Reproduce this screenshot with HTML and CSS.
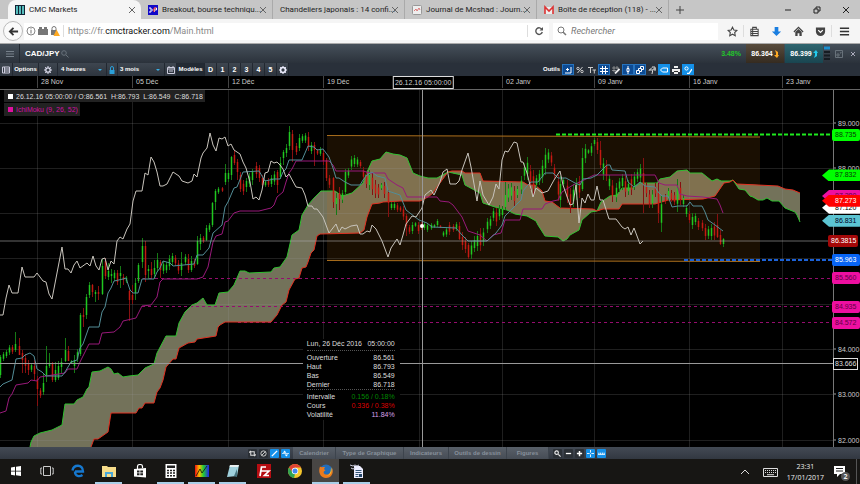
FILE: index.html
```html
<!DOCTYPE html>
<html lang="fr">
<head>
<meta charset="utf-8">
<title>CMC Markets</title>
<link rel="stylesheet" href="styles.css">
</head>
<body>
<header class="tabs">
  <div class="tab active"><svg class="fav" viewBox="0 0 10 10"><rect width="10" height="10" fill="#123"/><path d="M1 1h2v8H1zM4 1h2v8H4zM7 1h2v8H7z" fill="#5bb"/></svg><span>CMC Markets</span><button class="x" aria-label="Fermer"><svg viewBox="0 0 8 8"><path d="M1 1l6 6M7 1L1 7" stroke="#666"/></svg></button></div>
  <div class="tab"><svg class="fav" viewBox="0 0 10 10"><rect width="10" height="10" fill="#1008c8"/><path d="M1 3h2v4H1M3.500 5h2M6.500 7V3h2v2H7" stroke="#fff" fill="none"/><path d="M6 7V3h2" stroke="#e22" fill="none"/></svg><span>Breakout, bourse techniqu...</span><button class="x" aria-label="Fermer"><svg viewBox="0 0 8 8"><path d="M1 1l6 6M7 1L1 7" stroke="#666"/></svg></button></div>
  <div class="tab"><span>Chandeliers japonais : 14 confi...</span><button class="x" aria-label="Fermer"><svg viewBox="0 0 8 8"><path d="M1 1l6 6M7 1L1 7" stroke="#666"/></svg></button></div>
  <div class="tab"><svg class="fav" viewBox="0 0 10 10"><rect x=".5" y=".5" width="9" height="9" rx="1" fill="#eee" stroke="#999"/><path d="M2 6l2-2 1 2 2-3 1 2" stroke="#d77" fill="none"/></svg><span>Journal de Mcshad : Journ...</span><button class="x" aria-label="Fermer"><svg viewBox="0 0 8 8"><path d="M1 1l6 6M7 1L1 7" stroke="#666"/></svg></button></div>
  <div class="tab"><svg class="fav" viewBox="0 0 10 10"><path d="M1 2h8v7H1z" fill="#eee"/><path d="M1 9V2l4 4 4-4v7" stroke="#d33" stroke-width="1.600" fill="none"/></svg><span>Boîte de réception (118) - ...</span><button class="x" aria-label="Fermer"><svg viewBox="0 0 8 8"><path d="M1 1l6 6M7 1L1 7" stroke="#666"/></svg></button></div>
  <button class="plus" aria-label="Nouvel onglet"><svg viewBox="0 0 8 8"><path d="M4 0v8M0 4h8" stroke="#444"/></svg></button>
  <div class="win">
    <button aria-label="Réduire"><svg viewBox="0 0 8 8"><path d="M1 4h6" stroke="#222"/></svg></button>
    <button aria-label="Restaurer"><svg viewBox="0 0 8 8"><path d="M1 3h4v4H1zM3 3V1h4v4H5" stroke="#222" fill="none"/></svg></button>
    <button aria-label="Quitter"><svg viewBox="0 0 8 8"><path d="M1 1l6 6M7 1L1 7" stroke="#222"/></svg></button>
  </div>
</header>
<nav class="nav">
  <button class="back" aria-label="Retour"><svg viewBox="0 0 12 12"><path d="M11 6H3M6 2L2 6l4 4" stroke="#333" stroke-width="2" fill="none"/></svg></button>
  <div class="url">
    <svg viewBox="0 0 10 10"><circle cx="5" cy="5" r="4" fill="none" stroke="#888"/><path d="M5 4v3.500M5 2.300v1" stroke="#777"/></svg>
    <svg viewBox="0 0 10 10"><path d="M0 3h1V1h3v2h2V1h3v2h1v6H0z" fill="#777"/></svg>
    <svg viewBox="0 0 10 10"><path d="M2 4V2.500a2 2 0 014 0V4" stroke="#777" fill="none"/><path d="M1 4h6v5H1z" fill="#777"/><path d="M6.500 3.500L10 10H3.500z" fill="#fa2"/></svg>
    <div class="addr">https://fr.<b>cmctracker.com</b>/Main.html</div>
    <button class="reload" aria-label="Actualiser"><svg viewBox="0 0 10 10"><path d="M8 3.500A3.300 3.300 0 108.300 6" stroke="#555" stroke-width="1.400" fill="none"/><path d="M9 1v3.500H5.500z" fill="#555"/></svg></button>
  </div>
  <div class="search"><svg viewBox="0 0 10 10"><circle cx="4" cy="4" r="3" fill="none" stroke="#777"/><path d="M6 6l3 3" stroke="#777" stroke-width="1.500"/></svg><input type="text" aria-label="Rechercher" placeholder="Rechercher"></div>
  <div class="navicons">
    <button aria-label="Favori"><svg viewBox="0 0 12 12"><path d="M6 1.300l1.500 3.100 3.300.400-2.400 2.300.600 3.400L6 8.900l-3 1.600.600-3.400L1.200 4.800l3.300-.400z" fill="none" stroke="#444" stroke-width="1.200"/></svg></button>
    <button class="split" aria-label="Marque-pages"><svg viewBox="0 0 12 12"><path d="M2 3.500h8v7H2zM4 3V1.500h4V3M2 6h8M2 8.300h8M4 3.500v7" fill="none" stroke="#444" stroke-width="1.100"/></svg></button>
    <button aria-label="Téléchargements"><svg viewBox="0 0 12 12"><path d="M4 1h4v5h3l-5 5-5-5h3z" fill="#1a7ee0"/></svg></button>
    <button aria-label="Accueil"><svg viewBox="0 0 12 12"><path d="M1 6.500L6 1.500l5 5" fill="none" stroke="#444" stroke-width="1.400"/><path d="M2.500 6.500L6 3.300l3.500 3.200V11H7V8H5v3H2.500z" fill="#444"/></svg></button>
    <button aria-label="Pocket"><svg viewBox="0 0 12 12"><path d="M1 1.500h10V6a5 5 0 01-10 0z" fill="#444"/><path d="M3.500 4.500L6 7l2.500-2.500" fill="none" stroke="#fff" stroke-width="1.400"/></svg></button>
    <button class="split menu" aria-label="Menu"><svg viewBox="0 0 12 12"><path d="M1 2.500h10M1 6h10M1 9.500h10" stroke="#333" stroke-width="1.800"/></svg></button>
  </div>
</nav>
<section class="title">
  <button class="burger" aria-label="Menu du graphique"><svg viewBox="0 0 8 8"><path d="M0 1.500h8M0 4h8M0 6.500h8" stroke="#76808a"/></svg></button>
  <h1>CAD/JPY</h1>
  <svg class="glass" viewBox="0 0 8 8"><circle cx="3" cy="3" r="2.300" fill="none" stroke="#68727b"/><path d="M5 5l2.500 2.500" stroke="#68727b"/></svg>
  <span class="pct">3.48%</span>
  <button class="price sell">86.364<svg viewBox="0 0 5 8"><path d="M1 0l3 2v3h1L3 8 0 5h2V3z" fill="#fa2"/></svg></button>
  <button class="price buy">86.399<svg viewBox="0 0 5 8"><path d="M1 8l3-2V3h1L3 0 0 3h2v2z" fill="#2ce"/></svg></button>
  <svg class="bars" viewBox="0 0 6 18"><path d="M0 3h6" stroke="#1b8fd0" stroke-width="3"/><path d="M0 7h6M0 10.500h6M0 14h6" stroke="#161c22" stroke-width="2"/></svg>
  <button class="tiny" aria-label="Agrandir"><svg viewBox="0 0 8 8"><path d="M.5 .5h7v7h-7zM2 6V4h2v2zM5 3h1V2" fill="none" stroke="#68727b"/></svg></button>
  <button class="tiny" aria-label="Fermer le graphique"><svg viewBox="0 0 8 8"><path d="M2 2l4 4M6 2L2 6" stroke="#aab" /></svg></button>
</section>
<section class="tools">
  <button class="t grid" aria-label="Liste"><svg viewBox="0 0 8 8"><path d="M.5 1h7v6h-7zM2 3h5M2 5h5M2.500 1v6" fill="none" stroke="#ccd"/></svg></button>
  <button class="t opt">Options</button>
  <button class="t cog" aria-label="Réglages"><svg viewBox="0 0 8 8"><circle cx="4" cy="4" r="2.200" fill="none" stroke="#dde" stroke-width="1.300"/><path d="M4 0v1.500M4 6.500V8M0 4h1.500M6.500 4H8M1.200 1.200l1 1M5.800 5.800l1 1M6.800 1.200l-1 1M1.200 6.800l1-1" stroke="#dde"/></svg></button>
  <button class="t period">4 heures<i></i></button>
  <button class="t lock" aria-label="Verrou"><svg viewBox="0 0 8 8"><path d="M1.500 4h5v4h-5z" fill="#2b9fd8"/><path d="M2.500 4V2a1.500 1.500 0 013 0v2" fill="none" stroke="#2b9fd8"/></svg></button>
  <button class="t range">3 mois<i></i></button>
  <button class="t cal" aria-label="Calendrier"><svg viewBox="0 0 8 8"><path d="M.5 1.500h7v6h-7zM2 0v2M6 0v2M1 3h6M2 5h4" fill="none" stroke="#ccd"/></svg></button>
  <button class="t model">Modèles</button>
  <button class="t n">D</button><button class="t n">1</button><button class="t n">2</button><button class="t n">3</button><button class="t n">4</button><button class="t n">5</button>
  <button class="t n" aria-label="Options des modèles"><svg viewBox="0 0 8 8"><circle cx="4" cy="4" r="2.400" fill="none" stroke="#eef" stroke-width="1.500"/><path d="M4 0v1.500M4 6.500V8M0 4h1.500M6.500 4H8M1.200 1.200l1 1M5.800 5.800l1 1M6.800 1.200l-1 1M1.200 6.800l1-1" stroke="#eef"/></svg></button>
  <div class="draw">
    <span>Outils</span>
    <button class="d on" aria-label="Infobulle"><svg viewBox="0 0 8 8"><path d="M7 1v6H1M2 3.500h3M3.500 2v3" fill="none" stroke="#fff"/></svg></button>
    <button class="d" aria-label="Pourcentage"><svg viewBox="0 0 8 8"><path d="M6.500 1l-5 6" stroke="#ccc"/><circle cx="2" cy="2.500" r="1.200" fill="none" stroke="#ccc"/><circle cx="6" cy="5.500" r="1.200" fill="none" stroke="#ccc"/></svg></button>
    <button class="d" aria-label="Texte"><svg viewBox="0 0 8 8"><path d="M0 1.500h5M2.500 1v6M4.500 4h3.500M6.300 4v3.500" stroke="#ccc" fill="none"/></svg></button>
    <button class="d on" aria-label="Grille"><svg viewBox="0 0 8 8"><path d="M2.500 0v8M5.500 0v8M0 2.500h8M0 5.500h8" stroke="#fff"/></svg></button>
    <button class="d" aria-label="Crayon"><svg viewBox="0 0 8 8"><path d="M2 0v6M0 2h7M5 0v3M0 4.500h4" stroke="#aaa" stroke-width=".7"/><path d="M3 7.500L7.500 3" stroke="#eee" stroke-width="1.800"/></svg></button>
    <button class="d on" aria-label="Chandelier"><svg viewBox="0 0 8 8"><path d="M4 0v8" stroke="#fff"/><path d="M3 2.500h2v3H3z" fill="#15a" stroke="#fff"/></svg></button>
    <button class="d on" aria-label="Calques"><svg viewBox="0 0 8 8"><path d="M.5 4.500h3v3h-3zM2.500 4V2.500h3v3H4M4.500 2V.5h3v3H6" fill="none" stroke="#fff"/></svg></button>
    <button class="d" aria-label="Épingle"><svg viewBox="0 0 8 8"><path d="M1 4.500l3-3M4 1h3M5 3h3M4 8l1-5M7 1v4M1 4h3" fill="none" stroke="#ddd"/></svg></button>
    <button class="d hot" aria-label="Étiquette"><svg viewBox="0 0 8 8"><path d="M.5 4l2-2h5v4h-5z" fill="none" stroke="#fff"/></svg></button>
    <button class="d" aria-label="Imprimer"><svg viewBox="0 0 8 8"><path d="M2 0h4v2H2zM0 3h8v3H0zM2 5h4v3H2z" fill="#eee"/><path d="M2 5.500h4" stroke="#333"/></svg></button>
    <button class="d hot" aria-label="Style"><svg viewBox="0 0 8 8"><circle cx="2.500" cy="2.500" r="1.600" fill="none" stroke="#fff"/><path d="M3 7.500h2L8 3" stroke="#fff" stroke-width="1.300" fill="none"/></svg></button>
  </div>
</section>
<main class="chart">
  <div class="dates" id="dates"><output class="cursor-date">26.12.16 05:00:00</output></div>
  <div class="plot">
    <svg class="series" id="series" viewBox="0 90 860 357" preserveAspectRatio="none" aria-label="Graphique CAD/JPY"></svg>
    <div class="legend"><p><i></i>26.12.16 05:00:00 / O:86.561&nbsp; H:86.793&nbsp; L:86.549&nbsp; C:86.718</p><p class="ichi"><i></i>IchiMoku (9, 26, 52)</p></div>
    <dl class="info">
      <div class="head"><dt>Lun, 26 Déc 2016</dt><dd>05:00:00</dd></div>
      <div><dt>Ouverture</dt><dd>86.561</dd></div>
      <div><dt>Haut</dt><dd>86.793</dd></div>
      <div><dt>Bas</dt><dd>86.549</dd></div>
      <div class="last"><dt>Dernier</dt><dd>86.718</dd></div>
      <div><dt>Intervalle</dt><dd class="up">0.156 / 0.18%</dd></div>
      <div><dt>Cours</dt><dd class="down">0.336 / 0.38%</dd></div>
      <div><dt>Volatilité</dt><dd class="vol">11.84%</dd></div>
    </dl>
    <div class="prices" id="prices"></div>
  </div>
</main>
<footer class="panel">
  <div class="mini left">
    <button aria-label="Rafraîchir"><svg viewBox="0 0 8 8"><path d="M2 2h4v4H2zM0 3l2-2M8 5L6 7" fill="none" stroke="#ddd" stroke-width="1.200"/></svg></button>
    <button aria-label="Aucun"><svg viewBox="0 0 8 8"><circle cx="4" cy="4" r="3" fill="none" stroke="#ddd"/><path d="M2 6l4-4" stroke="#ddd"/></svg></button>
    <button class="hot" aria-label="Ligne"><svg viewBox="0 0 8 8"><path d="M1 7l6-6" stroke="#fff" stroke-width="1.600"/></svg></button>
    <button class="hot" aria-label="Défilement"><svg viewBox="0 0 8 8"><path d="M1 3l2-2.500L5 3zM3 5h4L5 7.500z" fill="#fff"/><path d="M0 4h8" stroke="#fff" stroke-width=".8"/></svg></button>
  </div>
  <button class="p p1">Calendrier</button><button class="p p2">Type de Graphique</button><button class="p p3">Indicateurs</button><button class="p p4">Outils de dessin</button><button class="p p5">Figures</button>
  <div class="mini">
    <button aria-label="Zoom"><svg viewBox="0 0 8 8"><circle cx="3" cy="3" r="2" fill="none" stroke="#eee" stroke-width="1.300"/><path d="M5 5l2.500 2.500" stroke="#eee" stroke-width="1.300"/></svg></button>
    <button aria-label="Moins"><svg viewBox="0 0 8 8"><path d="M1 4h6" stroke="#fff" stroke-width="1.500"/></svg></button>
    <button aria-label="Plus"><svg viewBox="0 0 8 8"><path d="M1 4h6M4 1v6" stroke="#fff" stroke-width="1.700"/></svg></button>
    <button class="hot" aria-label="Centrer"><svg viewBox="0 0 8 8"><path d="M0 4h3M5 4h3M4 0v3M4 5v3" stroke="#fff"/></svg></button>
    <button class="hot" aria-label="Règle"><svg viewBox="0 0 8 8"><path d="M0 5h8M1 3v2M3 3v2M5 3v2M7 3v2" stroke="#fff"/></svg></button>
  </div>
</footer>
<footer class="task">
  <button aria-label="Démarrer"><svg viewBox="0 0 14 14"><path d="M2 3.500l4-.700v4H2zM7 2.700L12 2v4.800H7zM2 7.500h4v4l-4-.700zM7 7.500h5V12l-5-.700z" fill="#fff"/></svg></button>
  <button aria-label="Vue des tâches"><svg viewBox="0 0 14 14"><path d="M3.500 2.500h7v9h-7zM2 4H.8v6H2M12 4h1.200v6H12" fill="none" stroke="#ccc"/></svg></button>
  <button aria-label="Edge"><svg viewBox="0 0 14 14"><path d="M4 7.500h8C12 3.500 9.500 1.800 7 1.800S2 3 1.500 6.500M4 7.500c0 5 4.500 5.500 7.500 3.500" fill="none" stroke="#1678cf" stroke-width="2.400"/></svg></button>
  <button class="run" aria-label="Explorateur"><svg viewBox="0 0 14 14"><path d="M0 2h5l1 1h8v10H0z" fill="#f6dc8a"/><path d="M3 13V8h8v5H9v-3H5v3z" fill="#4aa7d8"/></svg></button>
  <button aria-label="Store"><svg viewBox="0 0 14 14"><path d="M4.500 5V2.500a2.500 2 0 015 0V4" fill="none" stroke="#fff" stroke-width="1.200"/><path d="M1 5l12-1v9.500L1 12.500z" fill="#fff"/><path d="M4 6.500h2.500v2H4zM7.300 6.500H10v2H7.300zM4 9.300h2.500v2H4zM7.300 9.300H10v2H7.300z" fill="#222"/></svg></button>
  <button class="run" aria-label="Calculatrice"><svg viewBox="0 0 14 14"><path d="M1.500 0h11v14h-11z" fill="#fff"/><path d="M3 1.500h8V4H3z" fill="#222"/><path d="M3 6.500h8M3 9h8M3 11.700h8" stroke="#222" stroke-width="1.500" stroke-dasharray="2 1"/></svg></button>
  <button class="run" aria-label="Couleurs"><svg viewBox="0 0 14 14"><defs><linearGradient id="rb"><stop stop-color="#e11"/><stop offset=".3" stop-color="#fb0"/><stop offset=".6" stop-color="#2c3"/><stop offset="1" stop-color="#22e"/></linearGradient></defs><path d="M0 1h14v12H0z" fill="url(#rb)"/><path d="M1 12l4-7 2 4 5-7" stroke="#111" stroke-width=".8" fill="none"/></svg></button>
  <button class="run" aria-label="Bloc-notes"><svg viewBox="0 0 14 14"><path d="M4 1h9l-2 11-10 1z" fill="#9fd0dc"/><path d="M4 1h9l-1 2H3.500z" fill="#e8eef0"/><path d="M11 5v8l-3-1z" fill="#47747f"/></svg></button>
  <button aria-label="FileZilla"><svg viewBox="0 0 14 14"><path d="M0 0h14v14H0z" fill="#b60d12"/><path d="M3 12L4.500 3H9M4 7h3.500M7.500 7H12l-4.500 4.500H12" fill="none" stroke="#fff" stroke-width="1.700"/></svg></button>
  <button aria-label="Chrome"><svg viewBox="0 0 14 14"><circle cx="7" cy="7" r="7" fill="#f5c62c"/><path d="M1 3.500A7 7 0 0113 3.500H7L4 8z" fill="#de4335"/><path d="M1 3.500L5 9l2 1-1 4A7 7 0 011 3.500z" fill="#30a352"/><circle cx="7" cy="7" r="3.200" fill="#fff"/><circle cx="7" cy="7" r="2.500" fill="#4286ee"/></svg></button>
  <button class="run now" aria-label="Firefox"><svg viewBox="0 0 14 14"><circle cx="7" cy="7" r="6.500" fill="#226dba"/><path d="M1 2.500C-1 8 1 14 7 14s8-6 6-10c0 4-3 7-6 6.500S4 7 6.500 6.500L5 5l1-2C3.500 3 2 3.500 1 2.500z" fill="#ec7b1c"/><path d="M12 3c2 5-1 9-5 9 4-1 5-4 5-9z" fill="#fbc52f"/></svg></button>
  <button class="run" aria-label="Writer"><svg viewBox="0 0 14 14"><path d="M4 2h6l3 3v9H4z" fill="#eef"/><path d="M5.500 6.500h6M5.500 8.500h6M5.500 10.500h3M5.500 12.500h3" stroke="#357"/><path d="M9 10h3v3H9z" fill="#246"/><path d="M0 1l3 1 2-1 2 1 2-1M1 4l2 1 2-1" fill="none" stroke="#ccd"/></svg></button>
  <div class="tray">
    <svg class="up-arrow" viewBox="0 0 8 8"><path d="M0 6l4-4 4 4" fill="none" stroke="#ddd"/></svg>
    <svg class="kbd" viewBox="0 0 15 10"><path d="M.5 1.500h14v8H.5z" fill="none" stroke="#ddd"/><path d="M2 3.500h11M2 5.500h11" stroke="#ddd" stroke-dasharray="1 1"/><path d="M4 7.700h7" stroke="#ddd"/></svg>
    <time>23:31<br>17/01/2017</time>
    <div class="notif"><svg viewBox="0 0 12 12"><path d="M0 1h11v8H6l-3 3V9H0z" fill="#fff"/><path d="M2 3.500h7M2 6h7" stroke="#222"/></svg><b>2</b></div>
  </div>
</footer>
<script src="chart.js"></script>
</body>
</html>
```
FILE: styles.css
```css
* { box-sizing: border-box; }
body { margin: 0; min-height: 100vh; display: flex; flex-direction: column; background: #000; font-family: "Liberation Sans", Arial, sans-serif; font-size: 7px; line-height: 9px; color: #ccc; overflow: hidden; }
button { border: 0; margin: 0; padding: 0; background: none; color: inherit; font: inherit; display: flex; align-items: center; justify-content: center; flex: none; }
svg { display: block; flex: none; }
p, h1, dl, dd { margin: 0; }

.tabs { display: flex; height: 19px; padding-left: 8px; background: #c6c6c6; color: #222; font-family: Roboto, "Noto Sans", sans-serif; font-size: 8px; line-height: 18px; }
.tab { display: flex; align-items: center; gap: 4px; flex: 0 1 132px; min-width: 0; padding: 0 5px 0 7px; border-right: 1px solid #aaa; }
.tab span { flex: 1; min-width: 0; white-space: nowrap; }
.tab.active { background: #f5f5f5; border: 0; border-radius: 8px 8px 0 0; flex-basis: 133px; }
.fav { width: 10px; height: 10px; }
.x svg { width: 8px; height: 8px; }
.plus { width: 22px; }
.plus svg, .win svg { width: 8px; height: 8px; }
.win { display: flex; margin-left: auto; }
.win button { width: 29px; }

.nav { display: flex; align-items: center; height: 25px; padding: 0 3px; background: #f5f5f5; border-bottom: 1px solid #aaa; color: #888; font-family: Roboto, "Noto Sans", sans-serif; font-size: 9px; }
.back { width: 20px; height: 20px; border: 1px solid #bbb; border-radius: 50%; background: #fafafa; }
.back svg { width: 11px; height: 11px; }
.url { display: flex; align-items: center; gap: 2px; flex: 1; height: 17px; padding-left: 2px; margin-left: 1px; background: #fff; }
.url svg, .search svg { width: 10px; height: 10px; }
.addr { flex: 1; padding-left: 4px; margin-left: 1px; border-left: 1px solid #ddd; line-height: 12px; }
.addr b { font-weight: 400; color: #111; }
.reload { width: 22px; height: 12px; border-left: 1px solid #ddd; }
.search { display: flex; align-items: center; gap: 4px; width: 165px; height: 17px; margin: 0 3px 0 4px; padding-left: 4px; background: #fff; }
.search input { width: 100%; min-width: 0; border: 0; padding: 0; background: none; font: italic 9px/12px Roboto, "Noto Sans", sans-serif; }
.search input::placeholder { color: #777; }
.navicons { display: flex; }
.navicons button { width: 22px; height: 12px; }
.navicons svg { width: 11px; height: 11px; }
.navicons .split { border-left: 1px solid #ddd; }
.navicons .menu { width: 26px; }

.title { display: flex; align-items: center; height: 19px; background: linear-gradient(#46505a, #2b323b); color: #fff; }
.burger { width: 20px; height: 19px; border-right: 1px solid #222931; }
.burger svg, .glass { width: 8px; height: 8px; }
.title h1 { font-size: 8px; margin-left: 5px; margin-right: 1px; }
.pct { margin-left: auto; margin-right: 4px; color: #22c52a; font-weight: 700; }
.price { width: 38px; height: 19px; gap: 1px; margin-left: 1px; font-weight: 700; }
.price svg { width: 5px; height: 8px; }
.sell { background: linear-gradient(#584c3d, #352b20); }
.buy { background: linear-gradient(#2f6670, #194550); }
.bars { width: 6px; height: 18px; margin: 0 2px 0 1px; }
.tiny { width: 14px; }
.tiny svg { width: 8px; height: 8px; }

.tools { display: flex; align-items: stretch; height: 13px; background: #29303a; color: #fff; font-size: 6px; font-weight: 700; }
.t { border-right: 1px solid #222831; background: linear-gradient(#3e4650, #2d343d); }
.t svg { width: 8px; height: 8px; }
.grid { width: 13px; }
.opt { width: 26px; }
.cog { width: 19px; }
.period { width: 49px; padding: 0 4px 0 3px; justify-content: space-between; }
.lock { width: 11px; }
.range { width: 47px; padding: 0 4px 0 2px; justify-content: space-between; }
.t i { border: 2px solid transparent; border-top-color: #3ab0e6; border-bottom: 0; }
.cal { width: 12px; }
.model { width: 28px; background: #232a33; }
.n { width: 12px; font-size: 7px; }
.draw { display: flex; align-items: center; margin-left: auto; padding-right: 166px; }
.draw span { margin-right: 2px; }
.d { width: 12px; height: 11px; border: 1px solid transparent; }
.d svg { width: 8px; height: 8px; }
.on { background: #0d4b94; border-color: #2773bd; }
.hot { background: #1490e8; }

.chart { flex: 1; display: flex; flex-direction: column; background: #000; }
.dates { position: relative; height: 14px; border-bottom: 1px solid #666; }
.dates span { position: absolute; top: 0; height: 12px; padding: 1px 0 0 3px; border-left: 1px solid #444; white-space: nowrap; }
.cursor-date { position: absolute; left: 49.200%; top: 0; transform: translateX(-50%); height: 13px; padding: 1px; border: 1px solid #ddd; background: #000; white-space: nowrap; z-index: 1; }
.plot { position: relative; flex: 1; }
.series { position: absolute; inset: 0; width: 100%; height: 100%; }
.legend { position: absolute; left: 4px; top: 0; display: flex; flex-direction: column; align-items: flex-start; gap: 1px; color: #ddd; }
.legend p { display: flex; align-items: center; gap: 3px; height: 12px; padding: 0 2px 0 4px; background: #222; white-space: nowrap; }
.legend i { width: 5px; height: 5px; background: #fff; }
.legend .ichi { color: #d010a0; height: 13px; }
.legend .ichi i { background: #e010a0; }
.info { position: absolute; left: 35.200%; top: 249px; width: 97px; padding: 0 5px 1px 4px; background: #000; color: #ddd; }
.info div { display: flex; justify-content: space-between; white-space: nowrap; }
.info .head, .info .last { border-bottom: 1px dotted #555; padding-bottom: 2px; margin-bottom: 2px; }
.info .last { padding-bottom: 0; }
.up { color: #080; }
.down { color: #d00; }
.vol { color: #d9a0e8; }
.prices { position: absolute; right: 0; top: 0; bottom: 0; width: 27px; border-left: 1px solid #777; }
.prices span { position: absolute; left: 4px; transform: translateY(-50%); }
.prices span::before { content: ""; position: absolute; left: -4px; top: 4px; width: 2px; height: 1px; background: #999; }
.prices .tag { left: -2px; width: 28px; height: 12px; padding-left: 3px; line-height: 12px; border-radius: 2px; }
.prices .tag::before { content: none; }
.prices .arrow { left: -12px; width: 39px; padding-left: 13px; clip-path: polygon(0 50%, 7px 0, 100% 0, 100% 100%, 7px 100%); }
.green { background: #0f0; color: #064006; }
.pink { background: #ee0fa0; color: #600045; }
.red { background: #f00; color: #fff; }
.white { background: #fff; color: #000; }
.cyan { background: #5cc4d2; color: #002; }
.blue { background: #0865f5; color: #fff; }
.prices .maroon { background: #a40808; color: #fff; left: -6px; width: 30px; }
.prices .box { background: #000; color: #ddd; border: 1px solid #ddd; border-radius: 0; left: -1px; width: 25px; padding-left: 1px; line-height: 10px; }

.panel { display: flex; height: 12px; background: linear-gradient(#434a54, #323841); color: #87909b; font-size: 6px; font-weight: 700; }
.mini { display: flex; align-items: center; gap: 2px; padding: 0 4px; }
.mini.left { margin-left: 244px; padding: 0 3px 0 4px; }
.mini button { width: 9px; height: 9px; border-radius: 1px; background: #2b3036; }
.mini .hot { background: #1490e8; }
.mini svg { width: 7px; height: 7px; }
.p { background: linear-gradient(#596069, #464c55); border-right: 1px solid #3d444d; }
.p1 { width: 43px; }
.p2 { width: 68px; }
.p3 { width: 45px; }
.p4 { width: 58px; }
.p5 { width: 42px; }

.task { display: flex; height: 25px; background: #171614; color: #eee; }
.task > button { width: 27px; margin-right: 4px; border-bottom: 2px solid transparent; }
.task > button:first-child { margin-left: 2px; }
.task > button svg { width: 14px; height: 14px; }
.task > .run { border-bottom-color: #a9cfe8; }
.task > .now { background: #484644; }
.tray { display: flex; align-items: center; gap: 14px; margin-left: auto; margin-right: 3px; padding-right: 6px; border-right: 1px solid #555; font-family: "Open Sans", sans-serif; font-size: 7px; line-height: 11px; text-align: center; }
.up-arrow { width: 8px; height: 8px; }
.kbd { width: 15px; height: 10px; margin-right: -5px; }
.notif { position: relative; width: 16px; height: 14px; margin-left: -4px; }
.notif svg { width: 12px; height: 12px; }
.notif b { position: absolute; right: 0; bottom: -2px; width: 9px; height: 9px; border-radius: 50%; background: #555; line-height: 9px; }
```
FILE: chart.js
```js
const WIDTH = 860;
const TOP = 90;
const HEIGHT = 357;
const yOf = price => 122.5 + (89 - price) * 45.3;

const white = "0,315 3,315 6,298 9,285 12,293 18,293 22,267 25,277 34,277 37,273 43,281 46,282 49,294 52,299 62,247 65,269 68,269 71,273 74,265 77,261 80,268 87,263 90,266 93,256 96,266 99,270 102,259 105,258 108,270 111,261 114,264 117,241 120,237 123,239 127,229 130,224 133,201 136,191 142,191 145,173 148,175 151,157 154,162 157,172 160,186 163,186 167,184 173,172 179,176 182,181 188,183 192,181 194,174 197,177 201,158 203,153 207,148 210,133 213,145 216,151 219,138 222,139 225,137 228,146 231,144 234,150 240,154 243,162 246,168 250,182 253,199 256,197 259,200 262,190 265,173 268,172 271,161 274,163 277,162 280,165 283,169 286,177 289,174 296,187 302,188 305,195 308,206 312,206 314,209 317,209 323,217 329,233 336,224 339,232 342,227 345,229 351,226 357,225 360,234 363,234 367,231 370,232 372,225 376,229 382,241 388,257 391,248 397,239 400,245 403,235 406,224 412,216 416,217 422,208 425,195 431,190 434,195 440,182 443,172 447,169 450,184 456,184 459,181 462,170 468,153 471,167 477,201 480,181 483,195 489,205 493,197 496,184 499,189 502,160 505,151 508,152 514,142 517,143 521,162 523,162 527,173 533,197 536,188 542,193 548,191 554,180 560,171 563,185 570,205 573,204 576,185 579,223 582,198 585,203 588,194 591,200 594,200 597,186 600,200 603,200 609,219 616,219 622,227 625,229 628,227 631,235 634,228 640,244 643,241";
const tenkan = "0,387 3,384 12,380 16,359 22,358 25,355 30,353 34,356 37,369 42,372 46,376 62,376 65,372 71,362 77,360 80,348 83,344 89,327 99,327 102,312 105,307 108,293 111,288 114,281 123,279 126,278 130,290 133,293 138,293 142,279 154,279 157,272 160,268 163,261 170,263 173,266 194,264 197,255 203,255 209,248 213,233 222,225 225,207 228,202 234,188 237,187 243,172 259,171 265,181 274,179 280,179 283,172 286,169 289,160 302,160 308,146 314,147 317,150 323,149 329,157 333,168 336,178 339,178 345,182 351,185 360,185 363,180 367,175 372,172 377,176 385,178 388,191 400,195 406,210 419,220 427,223 432,227 456,228 462,235 468,241 487,241 496,233 502,225 505,216 514,207 521,200 523,191 527,186 531,182 538,182 545,173 553,173 558,178 566,178 575,183 580,185 583,179 591,178 597,175 607,165 610,165 612,170 625,171 628,182 634,187 640,182 645,186 655,187 659,193 662,196 668,196 672,207 678,206 687,206 690,202 693,206 702,206 705,212 708,220 715,225 723,231";
const kijun = "0,413 6,411 9,398 12,394 16,385 28,383 31,380 37,381 40,377 46,376 65,373 68,369 77,369 80,362 89,344 99,344 102,333 114,332 120,327 123,321 136,318 142,306 151,305 157,297 160,282 163,279 197,279 203,277 208,267 213,242 216,236 222,234 225,222 228,221 234,213 240,211 259,211 271,208 274,205 277,197 283,192 286,182 289,173 292,169 296,161 329,161 333,165 336,171 363,171 370,173 385,173 388,179 397,185 403,188 407,197 437,197 440,201 449,202 453,205 459,213 462,217 468,231 480,235 487,241 493,235 501,233 505,220 520,220 523,209 542,209 545,204 553,201 558,200 562,192 573,185 582,181 588,178 594,175 655,175 659,183 665,185 677,185 680,194 687,196 703,197 717,199 720,205 723,213";
const spanA = "30,447 31,442 34,436 40,433 52,430 62,425 65,404 74,404 77,400 83,397 87,389 89,387 92,372 100,371 108,367 111,369 114,374 118,373 123,377 129,376 138,375 145,368 154,364 157,353 166,336 176,336 179,323 185,312 192,305 197,303 203,298 207,305 215,305 219,293 228,292 234,285 240,271 245,271 249,273 271,272 274,268 280,267 287,257 292,235 299,230 302,215 308,205 314,198 321,191 335,191 342,196 352,193 363,183 367,172 372,161 380,159 386,152 393,154 400,155 407,158 413,173 420,176 428,178 437,178 448,172 462,175 465,185 480,193 483,203 495,207 507,210 515,214 527,216 536,221 538,225 545,236 558,237 563,241 567,239 570,235 579,230 582,220 591,212 597,211 601,202 610,196 617,195 622,188 633,188 640,183 657,183 660,179 670,177 677,171 687,170 690,173 702,173 712,181 717,179 721,181 730,181 733,180 739,189 745,190 750,196 753,197 758,200 763,200 767,198 772,201 779,201 785,208 795,212 797,215 800,222";
const spanB = "91,447 94,439 98,439 108,432 111,413 136,413 139,408 142,408 145,403 154,403 157,392 160,388 163,380 166,367 173,359 176,359 179,348 188,343 195,342 197,339 216,336 218,327 220,325 225,322 271,322 277,315 282,305 286,302 289,290 295,279 299,278 302,268 306,267 308,262 311,253 314,250 317,236 320,234 360,233 364,230 367,217 372,204 380,203 383,202 400,201 420,201 428,197 433,193 437,187 448,172 452,171 462,171 465,173 480,173 483,181 523,182 528,185 535,185 542,191 545,201 552,202 560,208 593,209 597,211 603,209 619,209 622,204 655,204 668,200 703,199 715,196 724,183 730,182 733,180 737,184 778,186 785,189 793,190 800,193";

// Each candle: x, high, low, direction, then body top and bottom when known.
const candles = `0 355 378 g 357 375|3 352 361 g|6 350 358 g|9 345 355 g|12 345 354 r|15 332 352 g 344 350|19 338 355 r 346 355|22 350 373 r 353 360|25 354 373 r 358 366|28 360 375 r 364 370|31 363 372 g|34 360 381 r 366 374|37 376 406 r 379 389|40 388 398 r|43 373 395 g 383 392|46 346 382 g 366 376|49 353 368 g 363 366|52 362 382 r 364 380|55 362 382 g 370 380|58 361 380 g 366 378|61 358 373 g 362 367|65 338 362 g 350 361|68 346 361 r 351 361|71 360 364 g|74 355 373 g 360 366|77 349 362 g|80 313 356 g 315 354|83 308 327 r 315 317|86 294 319 g 297 315|89 282 298 g 285 295|92 284 297 r 285 292|95 290 302 g 292 294|98 286 300 r 292 294|102 259 295 g 266 294|105 258 279 r 261 276|108 263 280 g 271 277|111 269 283 g 274 276|114 270 281 g|117 270 285 r 273 282|120 266 288 g 273 276|123 274 285 r 277 280|126 276 283 g|129 290 321 r 291 300|132 285 304 r 295 300|135 278 300 g 283 293|138 263 283 g 265 281|142 238 268 g 246 262|145 241 282 r 246 275|148 265 279 g 269 271|151 262 278 r 269 275|154 260 279 g 268 274|157 253 272 g 260 268|160 260 278 r 262 270|163 261 274 g|166 262 273 g|169 255 270 g|172 253 266 g 256 262|175 255 266 r|178 260 274 r|181 252 276 g 263 270|185 254 265 g|188 254 273 r 259 270|191 256 272 g 261 270|194 259 268 r|197 236 265 g 241 264|200 234 250 g 238 244|203 236 243 r|206 225 241 g 228 240|209 223 232 g|212 202 227 g 203 225|215 189 210 g 191 202|218 187 194 g|222 187 192 r|225 164 185 g 173 182|228 170 182 g|231 156 180 g 157 175|234 150 165 r 155 163|237 159 180 r 162 172|240 172 192 r 175 189|243 180 195 r|246 178 192 g 181 187|249 173 187 g|252 169 185 g 172 180|256 162 178 r|259 165 182 r 168 178|262 175 186 r 178 185|265 180 187 g|268 178 187 r|271 175 187 g|274 171 185 g|277 170 193 r 172 185|280 157 179 g 163 177|283 150 165 g 152 158|286 144 157 g 148 153|289 126 150 g 132 146|292 130 162 r 134 150|296 143 155 r|299 134 151 g 138 148|302 134 143 g|305 133 143 g|308 132 151 r 137 147|311 142 154 g|314 142 166 r 145 150|317 149 155 r|320 147 156 g|323 149 165 r|326 158 181 r 160 178|329 175 188 r|333 177 208 r 178 202|336 193 215 g 198 204|339 187 210 r 193 199|342 190 203 g|345 169 195 g 172 192|348 168 178 g|351 156 170 g|354 155 167 g|357 157 167 g|360 160 168 r|363 167 180 r|366 172 188 r|369 170 190 g|372 172 195 r|375 180 198 r|378 184 198 r|381 183 190 g|384 182 198 r|388 190 217 r 193 203|391 202 210 g|394 202 210 g|397 203 212 r|400 206 212 r|403 206 220 r|406 214 236 r 216 226|409 225 234 r|412 222 234 g|415 222 227 g|418 222 234 r|421 222 230 r|424 222 230 g|427 223 232 g|431 223 230 g|434 224 228 g|437 219 227 g|440 225 228 r|443 231 237 g|446 227 237 g|449 222 235 r|453 224 232 r|456 222 231 g|459 222 240 r 226 239|462 232 250 r 237 245|465 237 253 r|468 243 259 r 245 257|471 241 259 g|474 236 252 g|477 231 251 g|480 228 251 r|483 228 246 g|487 218 233 g|490 216 229 g|493 208 221 g|496 208 226 r|499 205 220 g|502 206 218 g|505 182 210 g 195 207|508 184 202 g|511 183 200 g|514 186 206 r|517 186 198 g|521 176 194 g|524 163 180 g|527 157 180 g|530 165 190 r|533 170 195 r|536 175 188 g|539 170 185 g|542 160 183 g|545 148 175 g|548 149 163 g|551 152 166 r|554 164 179 r|558 175 201 r|560 176 208 g|563 178 186 g|567 180 203 r|570 188 213 r|573 184 207 g|576 178 200 g|579 176 198 r|582 148 191 g 158 189|585 144 163 g|588 149 154 g|591 143 156 g|594 138 146 g|597 138 154 r|600 141 168 r 150 165|603 158 180 g|606 160 181 r|609 175 190 g|612 180 202 r|616 183 202 g|619 178 192 g|622 174 190 g|625 176 197 r|628 180 195 g|631 174 195 r|634 172 190 g|637 169 182 g|640 164 182 g|643 158 213 r 173 185|646 182 197 r|649 190 208 r|652 190 208 g|655 183 197 r|658 183 223 r|661 195 232 g|665 194 204 r|668 188 200 g|671 190 202 r|674 192 205 r|677 179 212 g|680 182 205 r|683 195 207 g|686 205 217 g|689 211 223 r|692 213 229 g|695 213 225 g|698 218 230 r|702 220 231 r|705 224 240 r|708 226 239 g|711 224 240 g|714 222 240 r|717 214 238 r 225 237|720 230 245 r 235 244|723 238 247 g 239 244`;

const line = (x1, y1, x2, y2, color, extra = "") =>
  `<line x1="${x1}" y1="${y1}" x2="${x2}" y2="${y2}" stroke="${color}" ${extra}/>`;
const path = (points, color) =>
  `<polyline points="${points}" fill="none" stroke="${color}" stroke-width="1"/>`;

const dates = [[37, "28 Nov"], [132, "05 Déc"], [228, "12 Déc"], [323, "19 Déc"], [502, "02 Janv"], [594, "09 Janv"], [689, "16 Janv"], [782, "23 Janv"]];
const reversed = spanB.split(" ").reverse().join(" ");

let svg = "";
svg += `<rect x="327" y="135.500" width="433" height="125.500" fill="#1a0f02"/>`;
svg += `<polygon points="${spanA} ${reversed}" fill="#73725a"/>`;
svg += `<clipPath id="zone"><rect x="327" y="135" width="433" height="126"/></clipPath>`;
svg += `<polygon points="${spanA} ${reversed}" fill="#80714f" clip-path="url(#zone)"/>`;
for (let p = 82; p <= 89; p++) svg += line(0, Math.round(yOf(p)) + 0.5, 833, Math.round(yOf(p)) + 0.5, "#999", 'opacity=".2"');
for (const x of [...dates.map(d => d[0]), 419]) svg += line(x + 0.5, 90, x + 0.5, 447, "#999", 'opacity=".2"');
svg += line(327, 135.5, 760, 137, "#a86d1c") + line(327, 260.5, 760, 261.5, "#a86d1c");
svg += line(137, 278.5, 832, 278.5, "#950c6e", 'stroke-dasharray="3 3"');
svg += line(142, 306.5, 832, 306.5, "#950c6e", 'stroke-dasharray="3 3"');
svg += line(238, 322.5, 832, 322.5, "#950c6e", 'stroke-dasharray="3 3"');
svg += path(spanA, "#2fbf2f") + path(spanB, "#e03020");
for (const item of candles.split("|")) {
  const [x, high, low, dir, top, bottom] = item.split(" ");
  const third = (low - high) / 4;
  const t = top ? +top : +high + third;
  const b = bottom ? +bottom : +low - third;
  svg += line(+x + 0.5, high, +x + 0.5, low, dir === "g" ? "#157a15" : "#861010");
  svg += `<rect x="${+x - 0.25}" y="${t}" width="1.500" height="${b - t}" fill="${dir === "g" ? "#20c820" : "#c41a12"}"/>`;
}
svg += path(kijun, "#98197a") + path(tenkan, "#538d97") + path(white, "#c8c4bc");
svg += line(0, 241, 833, 241, "#aaa", 'opacity=".6"') + line(0, 363.5, 833, 363.5, "#999") + line(422.5, 90, 422.5, 447, "#999");
svg += line(556, 134.5, 832, 134.5, "#1eea1e", 'stroke-width="2" stroke-dasharray="4 2"');
svg += line(684, 260, 832, 260, "#1c62d8", 'stroke-width="2" stroke-dasharray="4 2"');
svg += `<circle cx="422" cy="226" r="2" fill="#fff"/>`;
document.getElementById("series").innerHTML = svg;

for (const [x, text] of dates) {
  document.getElementById("dates").insertAdjacentHTML("beforeend", `<span style="left:${x / WIDTH * 100}%">${text}</span>`);
}

const tags = [["89.000", ""], ["88.000", ""], ["84.000", ""], ["83.000", ""], ["82.000", ""],
  ["88.735", "tag green"], ["87.832", "tag arrow green"], ["87.380", "tag arrow pink"], ["87.120", "tag arrow white"],
  ["87.273", "tag arrow red"], ["86.831", "tag arrow cyan"], ["86.3815", "tag maroon"], ["85.963", "tag blue"],
  ["85.560", "tag pink"], ["84.935", "tag pink"], ["84.572", "tag pink"], ["83.666", "tag box"]];
for (const [text, kind] of tags) {
  const top = (yOf(+text) - TOP) / HEIGHT * 100;
  document.getElementById("prices").insertAdjacentHTML("beforeend", `<span class="${kind}" style="top:${top}%">${text}</span>`);
}
```
